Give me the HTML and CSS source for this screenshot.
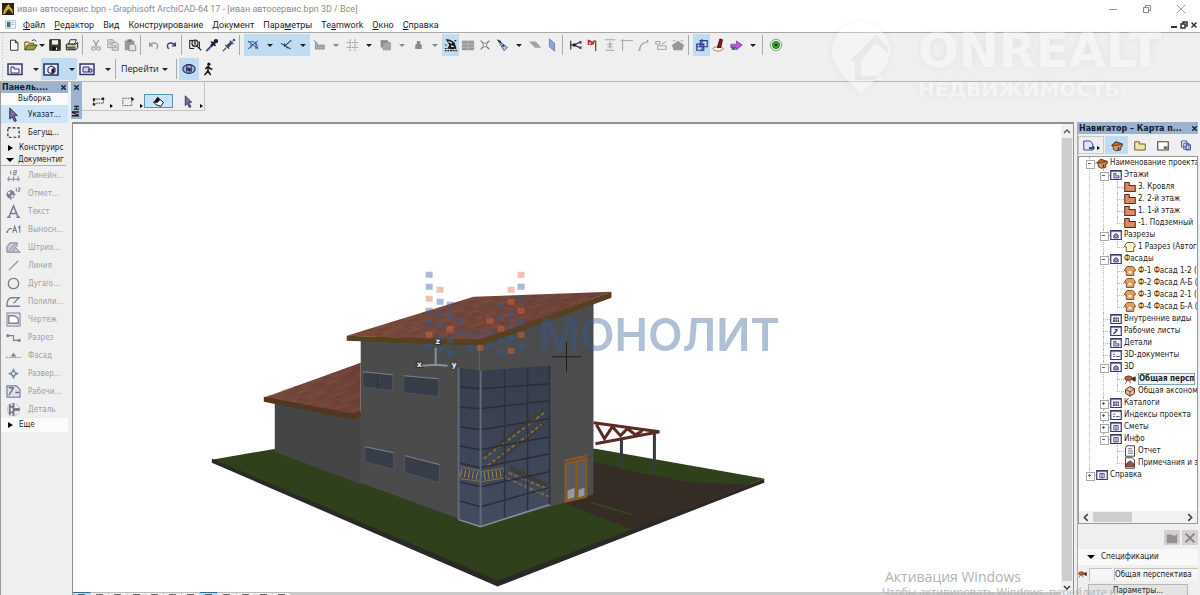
FILE: index.html
```html
<!DOCTYPE html>
<html lang="ru">
<head>
<meta charset="utf-8">
<title>Graphisoft ArchiCAD-64 17</title>
<link rel="stylesheet" href="styles.css">
</head>
<body>
<svg class="defs" aria-hidden="true">
  <defs>
    <symbol id="new" viewBox="0 0 16 16"><path d="M4 2.500h5.500l3 3v8.500h-8.500zM9.500 2.500v3h3" fill="#fff" stroke="#222"/></symbol>
    <symbol id="open" viewBox="0 0 16 16"><path d="M1 13.500v-9h4l1 1.500h5v2" fill="#f4ee9a" stroke="#3a3716"/><path d="M1 13.500l3-5.500h11l-3.500 5.500z" fill="#a59c3c" stroke="#3a3716"/><path d="M9 3c2-1.500 4-1 5 1" fill="none" stroke="#222"/></symbol>
    <symbol id="save" viewBox="0 0 16 16"><path d="M2 2h12v12h-12z" fill="#3c3d20" stroke="#111"/><path d="M4.500 2.500h7v5h-7z" fill="#eee"/><path d="M5 10h6v4h-6z" fill="#111"/><path d="M9 11h1.500v2.500h-1.500z" fill="#fff"/></symbol>
    <symbol id="print" viewBox="0 0 16 16"><path d="M4 7l2-5h7l-2 5z" fill="#fff" stroke="#111"/><path d="M1.500 7h11l2-2v6l-2 2.500h-11z" fill="#d5d5c8" stroke="#111"/><path d="M2 10.500h10M3 12.500h9" stroke="#111"/><path d="M8 9h3" stroke="#b6a800"/></symbol>
    <symbol id="cut" viewBox="0 0 16 16"><path d="M5 2l4 8M11 2l-4 8" stroke="#999" stroke-width="1.300"/><g fill="none" stroke="#999" stroke-width="1.300"><circle cx="5" cy="12" r="2"/><circle cx="11" cy="12" r="2"/></g></symbol>
    <symbol id="copy" viewBox="0 0 16 16"><g fill="#ddd" stroke="#999"><path d="M2 2h6l2 2v7h-8z"/><path d="M7 5h5l2 2v7h-7z"/></g><path d="M8.500 9h4M8.500 11h4M3.500 5h3M3.500 7h3" stroke="#999"/></symbol>
    <symbol id="paste" viewBox="0 0 16 16"><path d="M2 3h11v11h-11z" fill="#999"/><path d="M5 1.500h5v3h-5z" fill="#777"/><path d="M7 7h5l2.500 2v5.500h-7.500z" fill="#e4e4e4" stroke="#888"/></symbol>
    <symbol id="undo" viewBox="0 0 16 16"><path d="M3 5v4h4M3 9c3-5 10-4 9 1c0 1-1 2-2 2" fill="none" stroke="#8a93a5" stroke-width="1.400"/></symbol>
    <symbol id="redo" viewBox="0 0 16 16"><path d="M13 5v4h-4M13 9c-3-5-10-4-9 1c0 1 1 2 2 2" fill="none" stroke="#39416f" stroke-width="1.600"/></symbol>
    <symbol id="find" viewBox="0 0 16 16"><path d="M2 2v10M2 12h5M2 3h4M13 4v8" stroke="#222" stroke-width="1.200"/><circle cx="8" cy="6" r="3.500" fill="#dfe6f5" stroke="#222" stroke-width="1.300"/><path d="M10 9l5 5M7 4.500h2M8 4.500v3.500" stroke="#222" stroke-width="1.400"/></symbol>
    <symbol id="dropper" viewBox="0 0 16 16"><path d="M1.500 15l7-7" stroke="#3a56a0" stroke-width="2.400"/><path d="M7 9l4-4" stroke="#1b1b2c" stroke-width="3"/><path d="M7 4l5 5" stroke="#1b1b2c" stroke-width="2"/><circle cx="12.500" cy="3.500" r="2.500" fill="#1b1b2c"/></symbol>
    <symbol id="syringe" viewBox="0 0 16 16"><path d="M1 15l4-4M12 4l2.500-2.500" stroke="#26324e" stroke-width="1.200"/><path d="M4 8l4 4M9 3l4 4M13 1l2 2" stroke="#26324e" stroke-width="1.300"/><path d="M6 10l5-5" stroke="#3b4a6e" stroke-width="3.500"/></symbol>
    <symbol id="guide" viewBox="0 0 16 16"><path d="M1 3l13 10M1 13l12-10M2 5c5-3 11 0 11 7M5 6v6M11 4v9" fill="none" stroke="#274a7c" stroke-width="1.100"/></symbol>
    <symbol id="snap" viewBox="0 0 16 16"><path d="M14 2l-9 8M1 6l12 7M5 6l4 6" fill="none" stroke="#28465c" stroke-width="1.300"/></symbol>
    <symbol id="ruler" viewBox="0 0 16 16"><path d="M1 2l2 3v8h11v-5h-9v-3" fill="#a9a9a9" stroke="#8d8d8d"/></symbol>
    <symbol id="grid" viewBox="0 0 16 16"><path d="M5 1v14M11 1v14M1 5h14M1 11h14" stroke="#8f8f98" stroke-width="1.200" stroke-dasharray="2 1"/></symbol>
    <symbol id="stack" viewBox="0 0 16 16"><path d="M2 2h9v9h-9z" fill="#8d8d8d"/><path d="M5 5h9v9h-9z" fill="#a7a7a7" stroke="#939393"/></symbol>
    <symbol id="lock" viewBox="0 0 16 16"><path d="M6 3h4v3l2 2v5h-8v-5l2-2z" fill="#8a8a8a"/></symbol>
    <symbol id="surface" viewBox="0 0 16 16"><path d="M2 1l5 1 5 3 2 6-4 2-6-1 2-4z" fill="#1c1c1c"/><path d="M5 4l4 2M8 9l3 1" stroke="#fff" stroke-width="1.300"/><path d="M1 14.500h14M1 12h4M12 3h3M1 8h3M12 12h3" stroke="#222" stroke-width="1.300" stroke-dasharray="2 1"/></symbol>
    <symbol id="wall" viewBox="0 0 16 16"><path d="M1 3h14v11h-14z" fill="#9b9b9b"/><path d="M1 7h14M1 10.500h14M8 3v11" stroke="#bdbdbd"/></symbol>
    <symbol id="cross" viewBox="0 0 16 16"><path d="M3 3l3 3M13 3l-3 3M3 13l3-3M13 13l-3-3" stroke="#777" stroke-width="1.300"/><path d="M6 6h4v4h-4z" fill="none" stroke="#888"/></symbol>
    <symbol id="plane" viewBox="0 0 16 16"><path d="M2 2l4 3 8 6-4 4-5-8z" fill="#b8cdee" stroke="#2d4370"/><path d="M1 1l5 2 1 4z" fill="#142440"/><circle cx="9" cy="9" r="1.500" fill="#2d4370"/></symbol>
    <symbol id="flat" viewBox="0 0 16 16"><path d="M1 4h8l6 7h-7z" fill="#a2a2a6"/></symbol>
    <symbol id="vert" viewBox="0 0 16 16"><path d="M5 1l6 5v9l-6-5z" fill="#92a5d0" stroke="#6b80b3"/></symbol>
    <symbol id="trim" viewBox="0 0 16 16"><path d="M2 3v10M2 8h4l8-4M6 8l8 4" stroke="#222" stroke-width="1.300" fill="none"/><circle cx="6" cy="8" r="2" fill="#222"/><circle cx="13" cy="5" r="1.500" fill="#39508e"/><circle cx="13" cy="11" r="1.500" fill="#39508e"/></symbol>
    <symbol id="adjust" viewBox="0 0 16 16"><path d="M3 2v6M4 3l5 4M5 8l5-5" stroke="#b22c2c" stroke-width="2" fill="none"/><path d="M11 3v12" stroke="#8c3a3a" stroke-width="1.500"/></symbol>
    <symbol id="resize" viewBox="0 0 16 16"><path d="M2 2h12M3 14h10M8 4v8M5 7h6M5 10h6" stroke="#9a9a9a"/></symbol>
    <symbol id="corner" viewBox="0 0 16 16"><path d="M3 15v-12h12M1 3h2M3 1v2" stroke="#9a9a9a" fill="none"/></symbol>
    <symbol id="fillet" viewBox="0 0 16 16"><path d="M3 14c0-6 4-9 10-10M1 14h3M12 2v3" stroke="#9a9a9a" fill="none" stroke-width="1.300"/></symbol>
    <symbol id="split" viewBox="0 0 16 16"><path d="M2 4h5v3h-5zM4 9h10v4h-10zM9 7l5-3" stroke="#9a9a9a" fill="none"/></symbol>
    <symbol id="penta" viewBox="0 0 16 16"><path d="M8 3l7 5-2 6h-10l-2-6z" fill="#999"/><path d="M2 3h3M11 3h3" stroke="#aaa"/></symbol>
    <symbol id="group" viewBox="0 0 16 16"><path d="M2 7h8v7h-8zM6 3h8v7h-8zM8 1v14M2 10h12" stroke="#31358a" fill="none" stroke-width="1.300"/></symbol>
    <symbol id="brush" viewBox="0 0 16 16"><path d="M1 12c3-3 8-2 12 0-2 4-10 4-12 0z" fill="#fff" stroke="#c25a55"/><path d="M9 1l3 1-2 9h-4z" fill="#7a1f1a" stroke="#4a1512"/></symbol>
    <symbol id="violet" viewBox="0 0 16 16"><path d="M1 7h7v-4l7 5-7 6v-3h-7z" fill="#b05fd6" stroke="#8048aa"/><path d="M2 10h5v4h-5z" fill="#5b5a6e"/></symbol>
    <symbol id="target" viewBox="0 0 16 16"><circle cx="8" cy="8" r="6.500" fill="#d9f5d3" stroke="#7a9a78"/><circle cx="8" cy="8" r="4" fill="#3aa834" stroke="#17691c"/><circle cx="8" cy="8" r="1.500" fill="#0d3a10"/></symbol>
    <symbol id="plan" viewBox="0 0 16 16"><path d="M1 3h14v10.500h-14z" fill="#eef" stroke="#34376f" stroke-width="1.500"/><path d="M4 6h3v2h5v4h-8z" fill="#fff" stroke="#34376f"/></symbol>
    <symbol id="view3d" viewBox="0 0 16 16"><path d="M1 3h14v11h-14z" fill="#dfe8fb" stroke="#2c2f62" stroke-width="1.600"/><path d="M5 7l3-2 4 2v4l-3 2-4-2z" fill="#fff" stroke="#16183a"/><path d="M8.500 8l3-1v4l-3 2z" fill="#16183a"/></symbol>
    <symbol id="layout" viewBox="0 0 16 16"><path d="M1 3h14v10.500h-14z" fill="#eef" stroke="#34376f" stroke-width="1.500"/><path d="M4 6h6v5h-6zM10 8h3v3h-3z" fill="#cdd3e8" stroke="#34376f"/></symbol>
    <symbol id="orbit" viewBox="0 0 16 16"><ellipse cx="8" cy="8" rx="7" ry="5" fill="#a8b0e0" stroke="#26295c" stroke-width="1.300"/><ellipse cx="8" cy="8" rx="3" ry="5" fill="none" stroke="#26295c"/><path d="M6 6l4 1v4l-4-1z" fill="#26295c"/></symbol>
    <symbol id="walk" viewBox="0 0 16 16"><circle cx="9" cy="2.500" r="1.800" fill="#111"/><path d="M8 5l-3 3M8 5l3 3 2 0M8 5v5l3 5M8 10l-4 5" stroke="#111" stroke-width="1.700" fill="none"/></symbol>
    <symbol id="arrow" viewBox="0 0 16 16"><path d="M4 1l8 8-3.500 .5 2.500 5-2 1-2.500-5-2.500 2.500z" fill="#77749c" stroke="#2e2c4c"/></symbol>
    <symbol id="marquee" viewBox="0 0 16 16"><path d="M2 3h12v10h-12z" fill="none" stroke="#222" stroke-width="1.200" stroke-dasharray="3 2"/></symbol>
    <symbol id="bend" viewBox="0 0 16 16"><path d="M2 5h12v5h-8l-4 2z" fill="none" stroke="#222" stroke-dasharray="2 1"/><path d="M1 4h3v3h-3zM12 3h3v3h-3zM1 10h3v3h-3z" fill="#222"/></symbol>
    <symbol id="rotsel" viewBox="0 0 16 16"><path d="M1 4h11v9h-11z" fill="none" stroke="#444" stroke-dasharray="2 1"/><path d="M11 2l4 3-3 3z" fill="#222"/></symbol>
    <symbol id="fillpen" viewBox="0 0 16 16"><path d="M8 4l6 5-3 5-6-2-3-3z" fill="#fff" stroke="#111" stroke-width="1.200"/><path d="M7 2l3 4-4 4-4-1z" fill="#111"/></symbol>
    <symbol id="dim" viewBox="0 0 16 16"><path d="M1 12h14M3 9v5M8 9v5M13 9v5M5 3v4M8 3h3v2h-3v2h3" stroke="#878a9f" stroke-width="1.200" fill="none"/></symbol>
    <symbol id="level" viewBox="0 0 16 16"><circle cx="5" cy="9" r="4" fill="none" stroke="#7b7e94"/><path d="M5 4v11M0 9h10" stroke="#7b7e94"/><path d="M5 9v-4a4 4 0 0 1 4 4zM5 9v4a4 4 0 0 1-4-4z" fill="#7b7e94"/><path d="M11 2v4M13 2h2v2h-2v2h2" stroke="#7b7e94" fill="none"/></symbol>
    <symbol id="txt" viewBox="0 0 16 16"><path d="M3 14l5-12 5 12M5 10h6M1 14h4M11 14h4" stroke="#7d8095" stroke-width="1.600" fill="none"/></symbol>
    <symbol id="label" viewBox="0 0 18 16"><path d="M1 11l3-4h3M8 12l2.500-8 2.500 8M9 9h3M14.500 6l2-2v8" stroke="#7d8095" stroke-width="1.400" fill="none"/><circle cx="1.500" cy="11" r="1.200" fill="#7d8095"/></symbol>
    <symbol id="hatch" viewBox="0 0 16 16"><path d="M1 12v-5l3-4h8v3l-2 2 5 5h-14z" fill="#c6c8d6" stroke="#7d8095"/><path d="M3 12l7-8M7 12l3-4" stroke="#8a8ca0"/></symbol>
    <symbol id="line" viewBox="0 0 16 16"><path d="M3 13l10-10" stroke="#85879b" stroke-width="1.300"/></symbol>
    <symbol id="circle" viewBox="0 0 16 16"><circle cx="8" cy="8" r="5.500" fill="none" stroke="#7d8095" stroke-width="1.500"/></symbol>
    <symbol id="poly" viewBox="0 0 16 16"><path d="M15 13h-14c0-6 2-9 5-9h8l-6 6" fill="none" stroke="#7d8095" stroke-width="1.500"/></symbol>
    <symbol id="drawing" viewBox="0 0 16 16"><path d="M1 1h14v14h-14z" fill="#e0e1ea" stroke="#7d8095"/><path d="M3 4h6l4 3v5h-10z" fill="#fff" stroke="#7d8095" stroke-width="1.400"/></symbol>
    <symbol id="section" viewBox="0 0 16 16"><path d="M1 6h7v5h7" fill="none" stroke="#7d8095" stroke-width="1.200"/><circle cx="2" cy="6" r="1.700" fill="#7d8095"/><circle cx="14" cy="11" r="1.700" fill="#7d8095"/></symbol>
    <symbol id="elev" viewBox="0 0 16 16"><path d="M0 10h16" stroke="#7d8095" stroke-dasharray="2 1"/><path d="M5 9l3-4 3 4z" fill="#7d8095"/></symbol>
    <symbol id="interior" viewBox="0 0 16 16"><path d="M8 2l2 4 4 2-4 2-2 4-2-4-4-2 4-2z" fill="#7b8dab"/><circle cx="8" cy="8" r="1.500" fill="#e9e9ef"/></symbol>
    <symbol id="sheet" viewBox="0 0 16 16"><path d="M1 2h10l4 4v8h-14z" fill="#dfe0ee" stroke="#7d8095" stroke-width="1.300"/><path d="M3 12l5-8M3 4h5M10 9h4" stroke="#666b88" stroke-width="1.500"/></symbol>
    <symbol id="detail" viewBox="0 0 16 16"><path d="M4 2v12M8 1v14M4 5h4M4 11h4" stroke="#74778a" stroke-width="2"/><path d="M8 8h7" stroke="#74778a" stroke-width="3"/><circle cx="8" cy="8" r="6.500" fill="none" stroke="#a4a6b4" stroke-dasharray="2 1"/></symbol>
    <symbol id="house" viewBox="0 0 16 16"><path d="M1 8l5-5 9 3v3l-2 0v5l-6 1-4-2v-4z" fill="#e0955f" stroke="#53301b" stroke-width="1.200"/><path d="M1 8l5-5 9 3-7 2z" fill="#b8683c" stroke="#53301b"/><path d="M9 10h2v4h-2z" fill="#53301b"/></symbol>
    <symbol id="storey" viewBox="0 0 16 16"><path d="M1 2h6v4h8v8h-14z" fill="#dd8a62" stroke="#5a2e1c" stroke-width="1.400"/></symbol>
    <symbol id="facade" viewBox="0 0 16 16"><path d="M1 6l3-4h8l3 4v2h-2v6h-10v-6h-2z" fill="#e0a05f" stroke="#7a461f" stroke-width="1.200"/><path d="M6 8h4v3h-4z" fill="#fff3df"/></symbol>
    <symbol id="cutview" viewBox="0 0 16 16"><path d="M1 6l3-4h8l3 4v2h-2v6h-10v-6h-2z" fill="#fbf3d4" stroke="#6a5a2a" stroke-width="1.300"/></symbol>
    <symbol id="frame" viewBox="0 0 16 16"><path d="M1 2h14v12h-14z" fill="#fff" stroke="#38376f" stroke-width="1.600"/><path d="M1 3.500h14" stroke="#38376f"/></symbol>
    <symbol id="f-plan" viewBox="0 0 16 16"><use href="#frame"/><path d="M5 6h3v3h4v3h-7z" fill="#b9bfe6" stroke="#38376f"/></symbol>
    <symbol id="f-dot" viewBox="0 0 16 16"><use href="#frame"/><path d="M5 8l3-2 3 2v4h-6z" fill="#8b90c6" stroke="#38376f"/></symbol>
    <symbol id="f-grid" viewBox="0 0 16 16"><use href="#frame"/><path d="M4 6h8v6h-8z" fill="#42446f"/><path d="M4 9h8M7 6v6M10 6v6" stroke="#cfd2ee"/></symbol>
    <symbol id="f-pen" viewBox="0 0 16 16"><use href="#frame"/><path d="M5 12l5-6M6 6h4" stroke="#38376f" stroke-width="1.600"/></symbol>
    <symbol id="f-list" viewBox="0 0 16 16"><use href="#frame"/><path d="M4 7h3M4 10h3M8 10h5" stroke="#38376f"/></symbol>
    <symbol id="f-box" viewBox="0 0 16 16"><use href="#frame"/><path d="M5 6h6v6h-6z" fill="#d7daf2" stroke="#38376f"/><path d="M8 6v6" stroke="#38376f"/></symbol>
    <symbol id="camera" viewBox="0 0 16 16"><ellipse cx="6" cy="7" rx="5" ry="3" fill="#c06038" stroke="#4a2415"/><path d="M11 7l4-2v6l-4-2zM4 10l-2 4M7 10l2 4" fill="#4a2415" stroke="#4a2415"/></symbol>
    <symbol id="axon" viewBox="0 0 16 16"><path d="M2 6l6-4 6 3v6l-6 4-6-4z" fill="#efb9a0" stroke="#5a2e1c" stroke-width="1.300"/><path d="M2 6l6 3 6-4M8 9v6" fill="none" stroke="#5a2e1c"/></symbol>
    <symbol id="report" viewBox="0 0 16 16"><path d="M4 1h10v14h-12v-11z" fill="#fff" stroke="#444" stroke-width="1.300"/><path d="M5 5h6M5 8h7M5 11h7" stroke="#444"/></symbol>
    <symbol id="note" viewBox="0 0 16 16"><path d="M2 1h9l3 3v11h-12z" fill="#fff" stroke="#444" stroke-width="1.300"/><path d="M3 9l5-4 5 4v4h-10z" fill="#a8502e" stroke="#333"/></symbol>
    <symbol id="tabs" viewBox="0 0 16 16"><path d="M1 2h9l3 4v8h-12z" fill="#dfe4fa" stroke="#3d4a8c" stroke-width="1.300"/><path d="M8 10h5v-3l3 4-3 4v-2h-5z" fill="#3d4a8c"/></symbol>
    <symbol id="viewmap" viewBox="0 0 16 16"><path d="M1 3h6v3h8v8h-14z" fill="#f2e6a4" stroke="#5f5a38" stroke-width="1.300"/></symbol>
    <symbol id="book" viewBox="0 0 16 16"><path d="M1 3h14v11h-14z" fill="#fff" stroke="#444" stroke-width="1.500"/><path d="M9 9h5v4h-5z" fill="#5f7a48"/></symbol>
    <symbol id="pub" viewBox="0 0 16 16"><path d="M2 2h7v8h-7zM5 5h7v8h-7zM8 7h6v7h-6z" fill="#eef" stroke="#42478c" stroke-width="1.200"/></symbol>
    <symbol id="folder" viewBox="0 0 16 16"><path d="M2 4h6l1 1h3l2-2v11h-12z" fill="#968f8f"/></symbol>
    <symbol id="delete" viewBox="0 0 16 16"><path d="M3 3l10 10M13 3l-10 10" stroke="#8b7f7f" stroke-width="2"/></symbol>
  </defs>
</svg>

<header class="titlebar">
  <svg class="logo" viewBox="0 0 12 12"><path d="M0 0h12v12h-12z" fill="#2a2415"/><path d="M1 11c1-5 3-8 6-10l1 3c2 1 3 4 3 7l-4-5c-2 1-3 3-4 5z" fill="#d2ac3b"/></svg>
  <h1 class="title">иван автосервис.bpn - Graphisoft ArchiCAD-64 17 - [иван автосервис.bpn 3D / Все]</h1>
  <div class="win-buttons">
    <button aria-label="Свернуть"><svg viewBox="0 0 10 10"><path d="M1 5.500h8" stroke="#999"/></svg></button>
    <button aria-label="Восстановить"><svg viewBox="0 0 10 10"><path d="M1.500 3.500h5v5h-5zM3.500 3.500v-2h5v5h-2" fill="none" stroke="#888"/></svg></button>
    <button aria-label="Закрыть"><svg viewBox="0 0 10 10"><path d="M1 1l8 8M9 1l-8 8" stroke="#999"/></svg></button>
  </div>
</header>

<nav class="menubar">
  <svg class="doc-icon" viewBox="0 0 12 10"><path d="M.5 .5h11v9h-11z" fill="#eef3f6" stroke="#b8c2c8"/><path d="M2 2h4v6h-4z" fill="#2f7a78"/><path d="M7 3h3M7 5h3" stroke="#a0b0c0"/></svg>
  <button><u>Ф</u>айл</button>
  <button><u>Р</u>едактор</button>
  <button>Вид</button>
  <button>Конструирование</button>
  <button>Документ</button>
  <button>Пара<u>м</u>етры</button>
  <button>Te<u>a</u>mwork</button>
  <button><u>О</u>кно</button>
  <button><u>С</u>правка</button>
  <div class="doc-buttons">
    <button aria-label="Свернуть документ"><svg viewBox="0 0 8 8"><path d="M1 6h6" stroke="#333" stroke-width="2"/></svg></button>
    <button aria-label="Восстановить документ"><svg viewBox="0 0 8 8"><path d="M1 3h4v4h-4zM3 3v-2h4v4h-2" fill="none" stroke="#333" stroke-width="1.500"/></svg></button>
    <button aria-label="Закрыть документ"><svg viewBox="0 0 8 8"><path d="M1.500 1.500l5 5M6.500 1.500l-5 5" stroke="#333" stroke-width="1.500"/></svg></button>
  </div>
</nav>

<div class="toolbars">
  <div class="toolbar">
    <button class="tb" aria-label="Новый"><svg><use href="#new"/></svg></button>
    <button class="tb open" aria-label="Открыть"><svg><use href="#open"/></svg><i class="caret"></i></button>
    <button class="tb" aria-label="Сохранить"><svg><use href="#save"/></svg></button>
    <button class="tb" aria-label="Печать"><svg><use href="#print"/></svg></button>
    <span class="sep"></span>
    <button class="tb" aria-label="Вырезать"><svg><use href="#cut"/></svg></button>
    <button class="tb" aria-label="Копировать"><svg><use href="#copy"/></svg></button>
    <button class="tb" aria-label="Вставить"><svg><use href="#paste"/></svg></button>
    <span class="sep"></span>
    <button class="tb" aria-label="Отменить"><svg><use href="#undo"/></svg></button>
    <button class="tb" aria-label="Повторить"><svg><use href="#redo"/></svg></button>
    <span class="sep"></span>
    <button class="tb" aria-label="Найти"><svg><use href="#find"/></svg></button>
    <button class="tb" aria-label="Взять параметры"><svg><use href="#dropper"/></svg></button>
    <button class="tb" aria-label="Передать параметры"><svg><use href="#syringe"/></svg></button>
    <span class="sep"></span>
    <button class="combo on" aria-label="Линии построения"><svg><use href="#guide"/></svg><i class="caret"></i></button>
    <button class="combo on" aria-label="Привязка"><svg><use href="#snap"/></svg><i class="caret"></i></button>
    <button class="combo" aria-label="Линейка"><svg><use href="#ruler"/></svg><i class="caret dim"></i></button>
    <button class="combo" aria-label="Сетка"><svg><use href="#grid"/></svg><i class="caret"></i></button>
    <button class="combo" aria-label="Слои"><svg><use href="#stack"/></svg><i class="caret dim"></i></button>
    <button class="combo" aria-label="Блокировка"><svg><use href="#lock"/></svg><i class="caret dim"></i></button>
    <button class="tb on" aria-label="Поверхность"><svg><use href="#surface"/></svg></button>
    <button class="tb" aria-label="Стена"><svg><use href="#wall"/></svg></button>
    <button class="tb" aria-label="Пересечение"><svg><use href="#cross"/></svg></button>
    <button class="combo" aria-label="Рабочая плоскость"><svg><use href="#plane"/></svg><i class="caret"></i></button>
    <button class="tb" aria-label="Горизонтальная плоскость"><svg><use href="#flat"/></svg></button>
    <button class="tb" aria-label="Вертикальная плоскость"><svg><use href="#vert"/></svg></button>
    <span class="sep"></span>
    <button class="tb" aria-label="Обрезать"><svg><use href="#trim"/></svg></button>
    <button class="tb" aria-label="Подогнать"><svg><use href="#adjust"/></svg></button>
    <button class="tb" aria-label="Размер"><svg><use href="#resize"/></svg></button>
    <button class="tb" aria-label="Угол"><svg><use href="#corner"/></svg></button>
    <button class="tb" aria-label="Сопряжение"><svg><use href="#fillet"/></svg></button>
    <button class="tb" aria-label="Разделить"><svg><use href="#split"/></svg></button>
    <button class="tb" aria-label="Форма"><svg><use href="#penta"/></svg></button>
    <span class="sep"></span>
    <button class="tb on" aria-label="Группа"><svg><use href="#group"/></svg></button>
    <button class="tb" aria-label="Кисть"><svg><use href="#brush"/></svg></button>
    <button class="combo" aria-label="Отправить"><svg><use href="#violet"/></svg><i class="caret"></i></button>
    <span class="sep"></span>
    <button class="tb" aria-label="Цель"><svg><use href="#target"/></svg></button>
  </div>
  <div class="toolbar">
    <button class="combo wide" aria-label="План"><svg><use href="#plan"/></svg><i class="caret"></i></button>
    <button class="combo wide on" aria-label="3D-вид"><svg><use href="#view3d"/></svg><i class="caret"></i></button>
    <button class="combo wide" aria-label="Макет"><svg><use href="#layout"/></svg><i class="caret"></i></button>
    <span class="sep"></span>
    <button class="goto">Перейти <i class="caret"></i></button>
    <span class="sep"></span>
    <button class="tb on orbit" aria-label="Орбита"><svg><use href="#orbit"/></svg></button>
    <button class="tb" aria-label="Прогулка"><svg><use href="#walk"/></svg></button>
  </div>
</div>

<div class="workspace">
  <aside class="palette">
    <div class="bar"><span>Панель....</span><button class="x" aria-label="Закрыть панель"><svg viewBox="0 0 8 8"><path d="M1.500 1.500l5 5M6.500 1.500l-5 5" stroke="#14202e" stroke-width="1.500"/></svg></button></div>
    <div class="group-title">Выборка</div>
    <button class="tool active"><svg><use href="#arrow"/></svg>Указат...</button>
    <button class="tool"><svg><use href="#marquee"/></svg>Бегущ...</button>
    <button class="fold first"><i class="tri right"></i>Конструирс</button>
    <button class="fold last"><i class="tri down"></i>Документиг</button>
    <button class="tool off"><svg><use href="#dim"/></svg>Линейн...</button>
    <button class="tool off"><svg><use href="#level"/></svg>Отмет...</button>
    <button class="tool off"><svg><use href="#txt"/></svg>Текст</button>
    <button class="tool off"><svg><use href="#label"/></svg>Выносн...</button>
    <button class="tool off"><svg><use href="#hatch"/></svg>Штрих...</button>
    <button class="tool off"><svg><use href="#line"/></svg>Линия</button>
    <button class="tool off"><svg><use href="#circle"/></svg>Дуга/о...</button>
    <button class="tool off"><svg><use href="#poly"/></svg>Полили...</button>
    <button class="tool off"><svg><use href="#drawing"/></svg>Чертеж</button>
    <button class="tool off"><svg><use href="#section"/></svg>Разрез</button>
    <button class="tool off"><svg><use href="#elev"/></svg>Фасад</button>
    <button class="tool off"><svg><use href="#interior"/></svg>Развер...</button>
    <button class="tool off"><svg><use href="#sheet"/></svg>Рабочи...</button>
    <button class="tool off"><svg><use href="#detail"/></svg>Деталь</button>
    <button class="fold more"><i class="tri right"></i>Еще</button>
  </aside>

  <div class="center">
    <div class="infobox">
      <div class="grip"><button class="x" aria-label="Закрыть"><svg viewBox="0 0 8 8"><path d="M1.500 1.500l5 5M6.500 1.500l-5 5" stroke="#14202e" stroke-width="1.500"/></svg></button><span>Ин</span></div>
      <div class="info-tools">
        <button aria-label="Изгиб"><svg><use href="#bend"/></svg></button>
        <button aria-label="Поворот выборки"><svg><use href="#rotsel"/></svg></button>
        <button class="on" aria-label="Заливка"><svg><use href="#fillpen"/></svg></button>
        <button aria-label="Указатель"><svg><use href="#arrow"/></svg></button>
      </div>
    </div>

    <div class="main">
      <section class="viewport">
        <div class="canvas">
          <svg class="scene" viewBox="73 124 989 468" preserveAspectRatio="xMinYMin meet">
            <defs>
              <linearGradient id="roof" x1="0" y1="0" x2="1" y2="0"><stop offset="0" stop-color="#784a3d"/><stop offset="1" stop-color="#6c4138"/></linearGradient>
              <linearGradient id="glass" x1="0" y1="0" x2="0" y2="1"><stop offset="0" stop-color="#363d4b"/><stop offset="1" stop-color="#434d61"/></linearGradient>
              <pattern id="tiles" width="31" height="13" patternUnits="userSpaceOnUse" patternTransform="rotate(-17)"><path d="M0 2h11M15 8h12M22 3h6" stroke="#8a5546" stroke-width="2" opacity=".35"/><path d="M13 2h7M2 7h9M18 11h8" stroke="#55302a" stroke-width="2" opacity=".25"/></pattern>
              <pattern id="panels" width="13" height="400" patternUnits="userSpaceOnUse" patternTransform="translate(0 200)"><path d="M1 0v400" stroke="#3c3c3d" opacity=".3"/></pattern>
            </defs>
            <path d="M212 460L276 449H596L765 479L498 582z" fill="#2f401c"/>
            <path d="M594 462L640 473 692 483 735 484 752 484 633 530 566 504z" fill="#352d25"/>
            <path d="M592 503l40 12" stroke="#34451f" stroke-width="2"/>
            <path d="M212 459L498 581 765 479V483L498 587 212 463z" fill="#2b2927"/>
            <path d="M622 440v30M655 432v43" stroke="#37393f" stroke-width="3"/>
            <path d="M594 423L660 432 596 444M597 425l8 14 8-12 8 9 7-7 8 6 7-4" fill="none" stroke="#5a2b24" stroke-width="3"/>
            <path d="M275 400L362 414V485L275 452z" fill="#454546"/>
            <path d="M361 340L480 344V527L361 483z" fill="#4b4b4c"/>
            <path d="M480 344L594 300V495L480 527z" fill="#4c4b4e"/>
            <path d="M275 400L362 414V485L275 452z" fill="url(#panels)"/>
            <path d="M361 340L480 344V527L361 483z" fill="url(#panels)"/>
            <path d="M264 398L361 363V414L354 417z" fill="url(#roof)"/><path d="M264 397L361 363V414z" fill="url(#tiles)"/>
            <path d="M264 397L354 414 361 411V416L354 420 264 402z" fill="#50371f"/>
            <path d="M347 336L474 297 612 292 480 341z" fill="url(#roof)"/><path d="M347 336L474 297 612 292 480 341z" fill="url(#tiles)"/>
            <path d="M347 336L480 340 612 292V298L482 346 347 341z" fill="#56401f"/>
            <path d="M363 372l30 3v16l-30-4zM404 376l35 3v18l-35-4zM365 447l29 6v17l-29-8zM405 456l35 9v18l-35-10z" fill="#383e49" stroke="#4f545c"/>
            <path d="M363 372l30 3M404 376l35 3M365 447l29 6M405 456l35 9" stroke="#7b7f86"/>
            <path d="M378 374v15" stroke="#2a2d33"/>
            <path d="M459 368L481 371 550 366V505L481 527 459 520z" fill="url(#glass)"/>
            <path d="M484 457l62-47M490 466l54-42M510 468l38 18" stroke="#3d3d3a" stroke-width="5" fill="none"/>
            <path d="M484 459l62-47M488 466l54-41M508 479l41 18M509 473l40 17" stroke="#7a6848" stroke-width="2" stroke-dasharray="4 2" fill="none"/>
            <path d="M461 467l21 5 24-4M461 479l21 3 25-4" stroke="#8b7146" fill="none"/>
            <path d="M461 473l21 4 24-4" stroke="#a38549" stroke-width="8" stroke-dasharray="1 3" fill="none"/>
            <path d="M459 387l22 2 69-5M459 407l22 2 69-8M459 427l22 3 69-11M459 446l22 4 69-13M459 463l22 5 69-14M459 482l22 5 69-15M459 501l22 6 69-19" fill="none" stroke="#282d38" stroke-width="1.500"/>
            <path d="M505 370v148M528 368v143M550 366v139" stroke="#2c313c" stroke-width="1.500"/>
            <path d="M480 346v25" stroke="#5c5d60"/>
            <path d="M481 371v156M459 368v152" stroke="#626a79" stroke-width="2"/>
            <path d="M459 520l22 7 69-22" fill="none" stroke="#8a8e99" stroke-width="1.500"/>
            <path d="M566 464l21-5v38l-21 5z" fill="#5a5a5c" stroke="#8c5a1f" stroke-width="2"/>
            <path d="M577 461v39M565 461l22-5" stroke="#8c5a1f" stroke-width="2"/>
            <path d="M568 491l7-3v10l-7 2zM579 490l6-2v8l-6 2z" fill="#98989b"/>
            <g class="mono-blue">
              <path d="M426 272h7v6h-7zM426 284h7v6h-7zM426 308h7v6h-7zM426 320h7v6h-7zM426 344h7v6h-7zM437 299h7v6h-7zM437 311h7v6h-7zM437 323h7v6h-7zM437 335h7v6h-7zM437 347h7v6h-7zM447 302h7v6h-7zM447 313h7v6h-7zM447 337h7v6h-7zM447 350h7v6h-7zM457 318h7v6h-7zM457 330h7v6h-7zM467 332h7v6h-7zM467 345h7v6h-7zM477 332h7v6h-7zM487 330h7v6h-7zM487 342h7v6h-7zM498 303h7v6h-7zM498 315h7v6h-7zM498 338h7v6h-7zM498 350h7v6h-7zM508 311h7v6h-7zM508 323h7v6h-7zM508 335h7v6h-7zM518 284h7v6h-7zM518 296h7v6h-7zM518 320h7v6h-7zM518 344h7v6h-7z"/>
            </g>
            <g class="mono-red">
              <path d="M426 296h7v6h-7zM426 332h7v6h-7zM437 287h7v6h-7zM447 326h7v6h-7zM477 345h7v6h-7zM487 318h7v6h-7zM498 326h7v6h-7zM508 287h7v6h-7zM508 299h7v6h-7zM508 348h7v6h-7zM518 272h7v6h-7zM518 308h7v6h-7zM518 332h7v6h-7z"/>
            </g>
            <text class="mono-text" x="539" y="351">МОНОЛИТ</text>
            <path d="M436 348v16M422 366l14-1 12 1" fill="none" stroke="#8d9095" stroke-width="2"/>
            <g class="axis"><text x="417" y="367">x</text><text x="452" y="367">y</text><text x="436" y="344">z</text></g>
            <path d="M552 357h30M567 342v30" stroke="#1d1d1f"/>
          </svg>
          <p class="activation">Активация Windows</p>
        </div>
        <div class="vscroll"><svg viewBox="0 0 8 8"><path d="M1 6l3-3 3 3" fill="none" stroke="#555" stroke-width="1.400"/></svg><span class="thumb"></span><svg viewBox="0 0 8 8"><path d="M1 2l3 3 3-3" fill="none" stroke="#333" stroke-width="1.400"/></svg></div>
        <div class="status">
          <span class="views"><i class="on"></i><i></i><i></i><i></i><i></i><i></i><i></i><i class="on"></i><i></i><i></i><i></i><i></i></span>
          <span class="hthumb"></span>
        </div>
      </section>

      <aside class="navigator">
        <div class="bar"><span>Навигатор – Карта п...</span><button class="x" aria-label="Закрыть навигатор"><svg viewBox="0 0 8 8"><path d="M1.500 1.500l5 5M6.500 1.500l-5 5" stroke="#14202e" stroke-width="1.500"/></svg></button></div>
        <div class="nav-tabs">
          <button class="source" aria-label="Проект"><svg><use href="#tabs"/></svg><i></i></button>
          <button class="on" aria-label="Карта проекта"><svg><use href="#house"/></svg></button>
          <button aria-label="Карта видов"><svg><use href="#viewmap"/></svg></button>
          <button aria-label="Книга макетов"><svg><use href="#book"/></svg></button>
          <button aria-label="Издатель"><svg><use href="#pub"/></svg></button>
        </div>
        <div class="tree-box">
          <ul class="tree">
            <li><div class="row open"><svg><use href="#house"/></svg>Наименование проекта</div>
              <ul>
                <li><div class="row open"><svg><use href="#f-plan"/></svg>Этажи</div>
                  <ul>
                    <li><div class="row"><svg><use href="#storey"/></svg>3. Кровля</div></li>
                    <li><div class="row"><svg><use href="#storey"/></svg>2. 2-й этаж</div></li>
                    <li><div class="row"><svg><use href="#storey"/></svg>1. 1-й этаж</div></li>
                    <li><div class="row"><svg><use href="#storey"/></svg>-1. Подземный</div></li>
                  </ul></li>
                <li><div class="row open"><svg><use href="#f-dot"/></svg>Разрезы</div>
                  <ul><li><div class="row"><svg><use href="#cutview"/></svg>1 Разрез (Автог</div></li></ul></li>
                <li><div class="row open"><svg><use href="#f-dot"/></svg>Фасады</div>
                  <ul>
                    <li><div class="row"><svg><use href="#facade"/></svg>Ф-1 Фасад 1-2 (</div></li>
                    <li><div class="row"><svg><use href="#facade"/></svg>Ф-2 Фасад А-Б (</div></li>
                    <li><div class="row"><svg><use href="#facade"/></svg>Ф-3 Фасад 2-1 (</div></li>
                    <li><div class="row"><svg><use href="#facade"/></svg>Ф-4 Фасад Б-А (</div></li>
                  </ul></li>
                <li><div class="row"><svg><use href="#f-grid"/></svg>Внутренние виды</div></li>
                <li><div class="row"><svg><use href="#f-pen"/></svg>Рабочие листы</div></li>
                <li><div class="row"><svg><use href="#f-plan"/></svg>Детали</div></li>
                <li><div class="row"><svg><use href="#f-list"/></svg>3D-документы</div></li>
                <li><div class="row open"><svg><use href="#f-dot"/></svg>3D</div>
                  <ul>
                    <li><div class="row current"><svg><use href="#camera"/></svg><b>Общая персп</b></div></li>
                    <li><div class="row"><svg><use href="#axon"/></svg>Общая аксоном</div></li>
                  </ul></li>
                <li><div class="row closed"><svg><use href="#f-grid"/></svg>Каталоги</div></li>
                <li><div class="row closed"><svg><use href="#f-list"/></svg>Индексы проекта</div></li>
                <li><div class="row closed"><svg><use href="#f-box"/></svg>Сметы</div></li>
                <li><div class="row open"><svg><use href="#f-box"/></svg>Инфо</div>
                  <ul>
                    <li><div class="row"><svg><use href="#report"/></svg>Отчет</div></li>
                    <li><div class="row"><svg><use href="#note"/></svg>Примечания и з</div></li>
                  </ul></li>
              </ul></li>
            <li><div class="row closed"><svg><use href="#f-box"/></svg>Справка</div></li>
          </ul>
          <div class="hscroll"><svg viewBox="0 0 8 8"><path d="M6 1l-3 3 3 3" fill="none" stroke="#444" stroke-width="1.400"/></svg><span class="thumb"></span><svg viewBox="0 0 8 8"><path d="M2 1l3 3-3 3" fill="none" stroke="#444" stroke-width="1.400"/></svg></div>
        </div>
        <div class="nav-actions">
          <button aria-label="Новая папка"><svg><use href="#folder"/></svg></button>
          <button aria-label="Удалить"><svg><use href="#delete"/></svg></button>
        </div>
        <button class="spec-title"><i class="tri down"></i>Спецификации</button>
        <div class="spec-row"><svg><use href="#camera"/></svg><input class="id" aria-label="Номер"><input class="name" aria-label="Имя вида" value="Общая перспектива"></div>
        <button class="params">Параметры...</button>
      </aside>
    </div>
  </div>
</div>

<p class="activation-hint">Чтобы активировать Windows, перейдите в</p>

<div class="watermark">
  <svg viewBox="0 0 62 78"><path fill-rule="evenodd" d="M31 2a29 29 0 0 1 29 29c0 16-16 30-29 43c-13-13-29-27-29-43a29 29 0 0 1 29-29zM20 41L46 15 58 27V33L46 23 31 40V56H53L51 60H25V41z" fill="#fff"/></svg>
  <div class="wm-text"><strong>ONREALT</strong><span>НЕДВИЖИМОСТЬ</span></div>
</div>
</body>
</html>
```
FILE: styles.css
```css
* { box-sizing: border-box; }
body {
  margin: 0;
  height: 100vh;
  display: flex;
  flex-direction: column;
  overflow: hidden;
  position: relative;
  background: #efefef;
  color: #1c1c1c;
  font: 8px/12px "DejaVu Sans Condensed", "DejaVu Sans", sans-serif;
}
button, input { font: inherit; color: inherit; margin: 0; padding: 0; border: 0; background: none; border-radius: 0; }
ul { list-style: none; margin: 0; padding: 0; }
p { margin: 0; }
i { font-style: normal; }
.defs { position: absolute; width: 0; height: 0; }

.titlebar { display: flex; align-items: center; height: 17px; background: #fff; padding-left: 2px; flex: none; }
.logo { width: 12px; height: 12px; }
.title { margin: 0 0 0 3px; flex: 1; font: 9px/16px Roboto, sans-serif; color: #8c8c8c; white-space: nowrap; }
.win-buttons { display: flex; gap: 24px; padding-right: 14px; }
.win-buttons button { display: flex; }
.win-buttons svg { width: 10px; height: 10px; }

.menubar { display: flex; align-items: center; height: 16px; background: #fff; border-bottom: 1px solid #a9a9a9; padding-left: 5px; flex: none; gap: 9px; font: 9px/14px Roboto, sans-serif; }
.menubar button { white-space: nowrap; }
.doc-icon { width: 11px; height: 9px; margin-right: -2px; }
.doc-buttons { display: flex; gap: 2px; margin-left: auto; padding-right: 2px; }
.doc-buttons button { display: flex; }
.doc-buttons svg { width: 8px; height: 8px; }

.toolbars { border-bottom: 1px solid #b5b5b5; flex: none; height: 49px; }
.toolbar { display: flex; align-items: center; height: 24px; padding-left: 5px; background: radial-gradient(circle, #bbb 1px, transparent 1px) 1px 0 / 3px 3px repeat-y; }
.toolbar button { display: flex; align-items: center; justify-content: center; height: 22px; flex: none; }
.tb { width: 17px; }
.toolbar svg { width: 14px; height: 14px; }
.tb.open { width: 24px; gap: 1px; }
.tb.orbit { width: 20px; margin-left: -2px; }
.combo { width: 33px; }
.combo svg { margin: 0 3px; }
.combo .caret { margin: 0 4px; }
.combo.wide { width: 36px; }
.combo.wide svg { width: 16px; height: 16px; margin: 0 2px; }
.combo.wide .caret { margin: 0 2px 0 8px; }
.caret { width: 0; border: 3px solid transparent; border-top: 3px solid #222; border-bottom: 0; flex: none; }
.caret.dim { border-top-color: #888; }
.on { background: #c0dcf3; }
.sep { width: 7px; height: 20px; flex: none; background: linear-gradient(#aaa, #aaa) 2px 0 / 1px 100% no-repeat; }
.toolbar .goto { justify-content: space-between; width: 54px; padding: 0 6px 0 1px; font: 9px/14px "Open Sans", sans-serif; }

.workspace { display: flex; flex: 1; min-height: 0; }
.palette { width: 68px; flex: none; border-left: 1px solid #9a9a9a; overflow: hidden; margin-right: 3px; }
.bar { display: flex; align-items: center; justify-content: space-between; height: 11px; background: #9bb3cf; color: #14202e; font: bold 8px/11px "DejaVu Sans", sans-serif; white-space: nowrap; overflow: hidden; }
.palette .bar { padding: 0 1px; }
.x { display: flex; }
.x svg { width: 7px; height: 7px; }
.group-title { background: #fbfbfb; text-align: center; }
.tool { display: flex; align-items: center; width: 100%; height: 18px; padding: 1px 0 0 5px; gap: 7px; white-space: nowrap; }
.tool svg { width: 15px; height: 15px; flex: none; }
.tool.active { background: #cbe4f8; }
.tool.off { color: #a0a0a0; }
.fold { display: flex; align-items: center; width: 65px; height: 12px; padding-left: 6px; gap: 5px; white-space: nowrap; }
.fold.first { height: 13px; padding-top: 1px; }
.fold.last { border-bottom: 1px solid #b0b0b0; }
.fold.more { width: 100%; height: 14px; background: #fbfbfb; }
.tri { width: 0; height: 0; flex: none; margin: 0 1px; }
.tri.right { border: 3px solid transparent; border-left: 5px solid #000; border-right: 0; }
.tri.down { border: 4px solid transparent; border-top: 4px solid #000; border-bottom: 0; margin: 0 -1px; }

.center { display: flex; flex-direction: column; flex: 1; min-width: 0; }
.infobox { display: flex; align-items: flex-start; height: 40px; flex: none; }
.grip { display: flex; flex-direction: column; align-items: center; justify-content: space-between; width: 11px; height: 37px; padding: 2px 0; background: #9bb3cf; font: bold 8px/10px "DejaVu Sans", sans-serif; overflow: hidden; }
.grip span { writing-mode: vertical-rl; rotate: 180deg; }
.info-tools { display: flex; align-items: center; gap: 1px; height: 29px; padding: 10px 0 0 2px; width: 123px; border-right: 1px solid #c4c4c4; border-bottom: 1px solid #c4c4c4; }
.info-tools button { display: flex; align-items: center; justify-content: center; width: 29px; height: 14px; position: relative; }
.info-tools svg { width: 13px; height: 13px; }
.info-tools button:not(.on)::after { content: ""; position: absolute; right: 0; bottom: 0; border: 2px solid transparent; border-left: 3px solid #000; border-right: 0; }
.info-tools .on { border: 1px solid #5b93b8; background: #c5e4f8; }

.main { display: flex; flex: 1; min-height: 0; margin-left: 1px; }
.viewport { flex: 1; min-width: 0; display: grid; grid-template: minmax(0, 1fr) 3px / minmax(0, 1fr) 12px; border: 2px solid #8f8f8f; border-width: 2px 1px 0 1px; margin-right: 3px; }
.canvas { background: #fff; position: relative; overflow: hidden; }
.scene { display: block; width: 100%; height: 100%; }
.mono-blue { fill: #2f5c96; opacity: .42; }
.mono-red { fill: #e8693c; opacity: .42; }
.mono-text { fill: #2f5c96; opacity: .38; font: 600 45px Inter, sans-serif; }
.axis { fill: #e8e8e8; stroke: #333; stroke-width: 2px; paint-order: stroke; font: bold 8px "DejaVu Sans", sans-serif; }
.activation { position: absolute; right: 40px; bottom: 6px; font: 14px/18px "Open Sans", sans-serif; color: #b3b3b3; }
.activation-hint { position: absolute; right: 84px; top: 585px; font: 11px/14px "Open Sans", sans-serif; color: #b4b4b4; white-space: nowrap; }
.vscroll { display: flex; flex-direction: column; align-items: center; background: #f0f0f0; grid-row: 1 / 3; grid-column: 2; padding: 2px 0; }
.vscroll svg { width: 8px; height: 8px; margin: 1px 0; }
.vscroll .thumb { flex: 1; width: 10px; background: #cdcdcd; margin: 2px 0; }
.status { display: flex; background: #eee; }
.views { display: flex; width: 218px; }
.views i { flex: 1; border-right: 1px solid #ccc; border-top: 1px solid #bbb; background: linear-gradient(#666, #666) 5px 1px / 7px 1px no-repeat; }
.views .on { background-color: #b8dcf2; border-top-color: #2f6f9c; }
.hthumb { flex: 1; background: #c9c9c9; }

.navigator { width: 123px; flex: none; display: flex; flex-direction: column; padding: 0 2px 0 0; border-left: 1px solid #aaa; }
.navigator .bar { height: 12px; flex: none; padding-left: 1px; }
.navigator .bar span { flex: 1; overflow: hidden; }
.nav-tabs { display: flex; align-items: center; height: 22px; flex: none; }
.nav-tabs button { display: flex; align-items: center; justify-content: center; width: 23px; height: 18px; flex: none; }
.nav-tabs svg { width: 12px; height: 13px; }
.nav-tabs .source { width: 26px; gap: 2px; border: 1px solid #c8c8c8; margin-right: 1px; }
.source i { border: 2px solid transparent; border-left: 3px solid #000; border-right: 0; margin-top: 6px; }
.tree-box { display: flex; flex-direction: column; justify-content: space-between; background: #fff; border: 1px solid #999; height: 368px; flex: none; overflow: hidden; padding: 0 0 0 6px; }
.tree li { position: relative; }
.tree ul { padding-left: 14px; }
.tree li::before { content: ""; position: absolute; left: 4px; top: 0; bottom: 0; border-left: 1px dotted #b8b8b8; }
.tree li:last-child::before { bottom: auto; height: 6px; }
.row { display: flex; align-items: center; height: 12px; padding-left: 11px; gap: 2px; white-space: nowrap; position: relative; }
.row::before { content: ""; position: absolute; left: 4px; top: 6px; width: 7px; border-top: 1px dotted #b8b8b8; }
.row svg { width: 12px; height: 12px; flex: none; }
.row.open::after, .row.closed::after { content: ""; position: absolute; left: 1px; top: 3px; width: 7px; height: 7px; border: 1px solid #aaa; background: linear-gradient(#666, #666) 1px 2px / 3px 1px no-repeat #fff; }
.row.closed::after { background: linear-gradient(#666, #666) 1px 2px / 3px 1px no-repeat, linear-gradient(#666, #666) 2px 1px / 1px 3px no-repeat, #fff; }
.current b { border: 1px solid #7ba7b8; background: #edf6fa; line-height: 10px; }
.hscroll { display: flex; align-items: center; height: 12px; margin-left: -6px; padding: 0 2px; background: #f2f2f2; }
.hscroll svg { width: 9px; height: 9px; }
.hscroll .thumb { width: 39px; height: 10px; background: #cdcdcd; margin: 0 auto 0 3px; }
.nav-actions { display: flex; justify-content: flex-end; gap: 2px; padding: 6px 0 4px; flex: none; }
.nav-actions button { display: flex; align-items: center; justify-content: center; width: 16px; height: 15px; background: #d2d0d0; }
.nav-actions svg { width: 14px; height: 14px; }
.spec-title { display: flex; align-items: center; gap: 7px; height: 16px; padding-left: 10px; background: #f8f8f8; flex: none; }
.spec-row { display: flex; align-items: center; gap: 2px; height: 14px; margin-top: 2px; flex: none; }
.spec-row svg { width: 9px; height: 10px; flex: none; }
.spec-row input { height: 13px; border: 1px solid #c2c2c2; border-width: 1px 0 0 1px; background: #f5f5f5; min-width: 0; }
.spec-row .id { width: 23px; flex: none; }
.spec-row .name { flex: 1; }
.params { margin: 3px 10px 0; height: 14px; border: 1px solid #b5b5b5; background: #e3e3e3; flex: none; }

.watermark { position: absolute; right: 34px; top: 20px; display: flex; gap: 26px; pointer-events: none; opacity: .32; filter: drop-shadow(0 0 4px rgba(0, 0, 0, .16)); }
.watermark svg { width: 62px; height: 78px; }
.wm-text { display: flex; flex-direction: column; color: #fff; width: 248px; }
.wm-text strong { font: bold 48px/56px "DejaVu Sans", sans-serif; padding-top: 2px; }
.wm-text span { font: bold 20px/22px "DejaVu Sans", sans-serif; }
```
